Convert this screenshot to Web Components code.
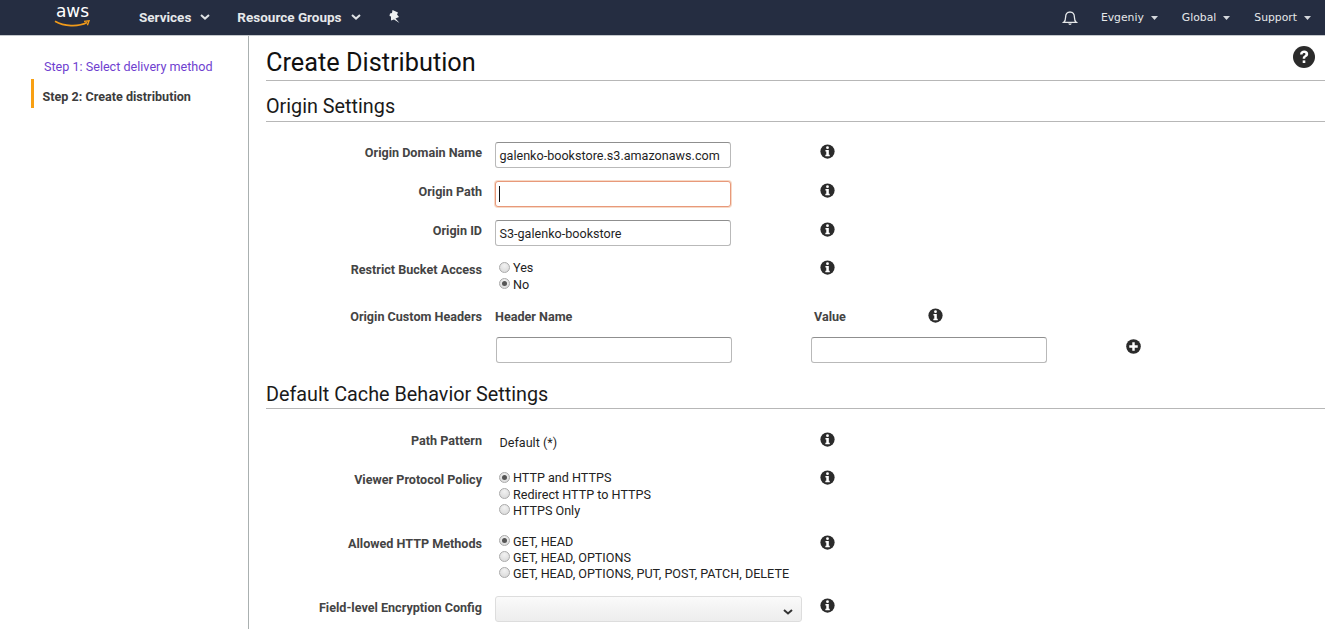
<!DOCTYPE html>
<html lang="en"><head><meta charset="utf-8"><title>Create Distribution</title>
<style>
html,body{margin:0;padding:0;height:629px;overflow:hidden;background:#fff;font-family:Roboto,"Liberation Sans",sans-serif;color:#2d2d2d}
</style></head><body>
<aws-shell>
<aws-header slot="header"></aws-header>
<side-steps slot="side"></side-steps>
<page-title>Create Distribution</page-title>
<section-head style="margin-top:12px">Origin Settings</section-head>
<form-row top="20" lpad="3" label="Origin Domain Name"><text-input value="galenko-bookstore.s3.amazonaws.com"></text-input></form-row>
<form-row top="13" lpad="3" label="Origin Path"><text-input focused></text-input></form-row>
<form-row top="13" lpad="3" label="Origin ID"><text-input value="S3-galenko-bookstore"></text-input></form-row>
<form-row top="14" lpad="2" imargin="0" label="Restrict Bucket Access"><radio-opt>Yes</radio-opt><radio-opt checked>No</radio-opt></form-row>
<custom-headers></custom-headers>
<section-head style="margin-top:19px;line-height:26px">Default Cache Behavior Settings</section-head>
<form-row top="23" lpad="1" imargin="0" label="Path Pattern"><span style="display:block;font-size:12.6px;line-height:17px;padding:2px 0 0 4.5px;color:#1f1f1f">Default (*)</span></form-row>
<form-row top="19" lpad="2" imargin="0" rh="16.4" label="Viewer Protocol Policy"><radio-opt checked>HTTP and HTTPS</radio-opt><radio-opt>Redirect HTTP to HTTPS</radio-opt><radio-opt>HTTPS Only</radio-opt></form-row>
<form-row top="14.8" lpad="2" imargin="1" rh="16" label="Allowed HTTP Methods"><radio-opt checked>GET, HEAD</radio-opt><radio-opt>GET, HEAD, OPTIONS</radio-opt><radio-opt>GET, HEAD, OPTIONS, PUT, POST, PATCH, DELETE</radio-opt></form-row>
<form-row top="14" lpad="4" imargin="2" label="Field-level Encryption Config"><select-box></select-box></form-row>
</aws-shell>
<script>
function def(name,html,init){
  customElements.define(name,class extends HTMLElement{
    constructor(){super();this.attachShadow({mode:'open'}).innerHTML=html}
    connectedCallback(){if(init)init(this,this.shadowRoot)}
  });
}
const INFO='<svg viewBox="0 0 16 16" width="15" height="15" style="display:block"><circle cx="8" cy="8" r="7.6" fill="#2b2b2b"/><circle cx="8" cy="3.9" r="1.5" fill="#fff"/><path d="M5.8 6.4h3.6v5.1h1v1.6H5.7v-1.6h1V8H5.8z" fill="#fff"/></svg>';
def('info-icon',`<style>:host{display:block;width:15px;height:15px}</style>${INFO}`);
def('aws-shell',`<style>
:host{display:grid;grid-template-columns:249px 1fr;grid-template-rows:36px 593px;height:629px;overflow:hidden}
.h{grid-column:1/3}
.s{border-right:1px solid #aab0b0;box-sizing:border-box}
.m{padding:0 0 0 17px;position:relative;overflow:hidden}
</style><div class="h"><slot name="header"></slot></div><div class="s"><slot name="side"></slot></div><div class="m"><slot></slot></div>`);
def('nav-item',`<style>
:host{display:flex;align-items:center;gap:var(--g,9px);color:#e6e8ea;font:var(--f,700 13.5px Roboto,sans-serif);white-space:nowrap}
svg{display:block}
.t{display:none}
:host([tri]) .t{display:block}
:host([tri]) .c{display:none}
</style><slot></slot><svg class="c" width="10" height="6" viewBox="0 0 10 6"><path d="M1 1l4 3.6L9 1" fill="none" stroke="#dfe2e5" stroke-width="2"/></svg><svg class="t" width="7" height="4" viewBox="0 0 7 4"><path d="M0 0h7L3.5 4z" fill="#d5d8dc"/></svg>`);
def('aws-header',`<style>
:host{display:flex;align-items:center;height:36px;box-sizing:border-box;background:#252d41;border-bottom:1px solid #c4c8cc;position:relative}
.logo{margin-left:54px;width:37px;position:relative;height:28px;margin-top:-4px}
.logo span{display:block;font:400 17px "DejaVu Sans",sans-serif;color:#fff;text-align:center;margin-top:-1px}
.logo svg{position:absolute;left:0;top:18px}
.main{margin-top:-2px}
.right{margin-left:auto;display:flex;align-items:center;--f:400 10.8px "DejaVu Sans",Verdana,sans-serif;--g:7px}
</style>
<div class="logo"><span>aws</span><svg width="37" height="8" viewBox="0 0 37 8"><path d="M1 1.2C10 6.5 24 7.2 33 2.6" fill="none" stroke="#f09a1a" stroke-width="1.7"/><path d="M30 1.4l5-.6-1.6 4.4" fill="none" stroke="#f09a1a" stroke-width="1.4"/></svg></div>
<nav-item class="main" style="margin-left:48px">Services</nav-item>
<nav-item class="main" style="margin-left:27px">Resource Groups</nav-item>
<svg style="margin:-2px 0 0 27px" width="14" height="15" viewBox="0 0 14 15"><path d="M4.5 1L10 3.5 9 5.5 11 8 7.5 9.5 11.5 14 6 10.5 3 11.5 3 7.5 1.5 7 2 4.5 4 4z" fill="#eef0f2"/></svg>
<div class="right">
<svg width="16" height="17" viewBox="0 0 16 17" style="margin-right:23px"><path d="M1.6 13.4c1.5-1.2 2-2.4 2-5.2 0-3 1.6-5 4.4-5s4.4 2 4.4 5c0 2.8.5 4 2 5.2z" fill="none" stroke="#e6e8ea" stroke-width="1.3"/><path d="M6.2 14.6a1.9 1.9 0 003.6 0zM7.2 2.6a.9.9 0 011.6 0" fill="#e6e8ea"/></svg>
<nav-item tri>Evgeniy</nav-item>
<nav-item tri style="margin-left:24px">Global</nav-item>
<nav-item tri style="margin-left:24px;margin-right:14px">Support</nav-item>
</div>`);
def('side-steps',`<style>
:host{display:block;font:12.6px Roboto,sans-serif}
.a{color:#6f3fd0;padding:23px 0 0 44px;line-height:16px}
.b{margin:4px 0 0 31px;border-left:3px solid #f8a013;height:29px;box-sizing:border-box;padding-left:8.5px;font-weight:700;line-height:36px;color:#3c3c3c}
</style><div class="a">Step 1: Select delivery method</div><div class="b">Step 2: Create distribution</div>`);
def('page-title',`<style>
:host{display:block;position:relative;height:44px;border-bottom:1px solid #b7b7b7;box-sizing:content-box;font:400 25.3px/54px Roboto,sans-serif;color:#111}
svg{position:absolute;right:10px;top:10px}
</style><slot></slot><svg width="22" height="22" viewBox="0 0 22 22"><circle cx="11" cy="11" r="11" fill="#2b2b2b"/><path d="M7 8.4C7.2 5.8 9 4.6 11.2 4.6c2.4 0 4 1.4 4 3.4 0 1.7-1 2.5-2 3.1-.8.5-1 .8-1 1.7H9.7c0-1.6.4-2.4 1.5-3.1.9-.6 1.3-.9 1.3-1.6 0-.7-.6-1.2-1.4-1.2-.9 0-1.5.5-1.6 1.5z" fill="#fff"/><rect x="9.7" y="14.4" width="2.6" height="2.6" fill="#fff"/></svg>`);
def('section-head',`<style>
:host{display:block;font:400 19.8px/28px Roboto,sans-serif;color:#1a1a1a;border-bottom:1px solid #b7b7b7}
</style><slot></slot>`);
def('form-row',`<style>
:host{display:grid;grid-template-columns:216px 337px 17px;align-items:start;width:570px}
.l{text-align:right;font:700 12.6px/16px Roboto,sans-serif;color:#444;white-space:nowrap}
.c{margin-left:13px}
info-icon{margin-left:1px}
</style><div class="l" id="l"></div><div class="c"><slot></slot></div><info-icon id="n"></info-icon>`,
(el,r)=>{const l=r.getElementById('l');l.textContent=el.getAttribute('label');el.style.marginTop=(el.getAttribute('top')||0)+'px';
  l.style.paddingTop=(el.getAttribute('lpad')||0)+'px';
  r.getElementById('n').style.marginTop=(el.getAttribute('imargin')||1.5)+'px';
  if(el.hasAttribute('rh'))el.style.setProperty('--rh',el.getAttribute('rh')+'px');
});
def('text-input',`<style>
:host{display:block;width:236px;height:26px}
.i{width:100%;height:100%;box-sizing:border-box;border:1px solid #b9b9b9;border-top-color:#8f8f8f;border-radius:3px;padding:1px 3.5px 0;font:12.6px/24px Roboto,sans-serif;color:#1f1f1f;white-space:nowrap;overflow:hidden;background:#fff}
.f{border:1px solid #e8997a;box-shadow:0 0 0 1px rgba(236,170,130,.45);padding-left:3px}
.f::before{content:"";display:inline-block;width:1px;height:16px;background:#111;vertical-align:-3px}
</style><div class="i" id="i"></div>`,
(el,r)=>{const i=r.getElementById('i');i.textContent=el.getAttribute('value')||'';if(el.hasAttribute('focused'))i.classList.add('f')});
def('radio-opt',`<style>
:host{display:flex;align-items:center;height:var(--rh,16.5px);font:12.6px/16px Roboto,sans-serif;color:#222;padding-left:4px;white-space:nowrap}
.r{width:9px;height:9px;border-radius:50%;border:1px solid #aaa;background:radial-gradient(circle at 50% 30%,#f2f2f2,#d6d6d6);margin-right:3px;display:grid;place-items:center;margin-top:-2px;flex:none}
.d{width:5px;height:5px;border-radius:50%;background:#555;display:none}
:host([checked]) .d{display:block}
</style><span class="r"><span class="d"></span></span><slot></slot>`);
def('select-box',`<style>
:host{display:block;width:307px;height:26px;box-sizing:border-box;border:1px solid #ddd;border-radius:3px;background:linear-gradient(#fafafa,#ededed);position:relative}
svg{position:absolute;right:8px;top:12px}
</style><svg width="10" height="6" viewBox="0 0 10 6"><path d="M1 1l4 3.5L9 1" fill="none" stroke="#333" stroke-width="2"/></svg>`);
def('custom-headers',`<style>
:host{display:block;margin-top:16px;height:54px;width:900px}
.top{display:flex;align-items:flex-start;height:28px}
.l{width:216px;text-align:right;font:700 12.6px/16px Roboto,sans-serif;color:#444;white-space:nowrap}
.h{font:700 12.6px/16px Roboto,sans-serif;color:#444}
.row{display:flex;align-items:flex-start;margin-left:230px}
.p{margin:2px 0 0 79px;display:block}
</style><div class="top"><div class="l">Origin Custom Headers</div><div class="h" style="margin-left:13px;width:319px">Header Name</div><div class="h" style="width:113.5px">Value</div><info-icon style="margin-top:-1.5px"></info-icon></div>
<div class="row"><text-input></text-input><text-input style="margin-left:79px"></text-input><svg class="p" width="15" height="15" viewBox="0 0 16 16"><circle cx="8" cy="8" r="7.8" fill="#2b2b2b"/><path d="M6.7 3.5h2.6v3.2h3.2v2.6H9.3v3.2H6.7V9.3H3.5V6.7h3.2z" fill="#fff"/></svg></div>`);
</script>
</body></html>
